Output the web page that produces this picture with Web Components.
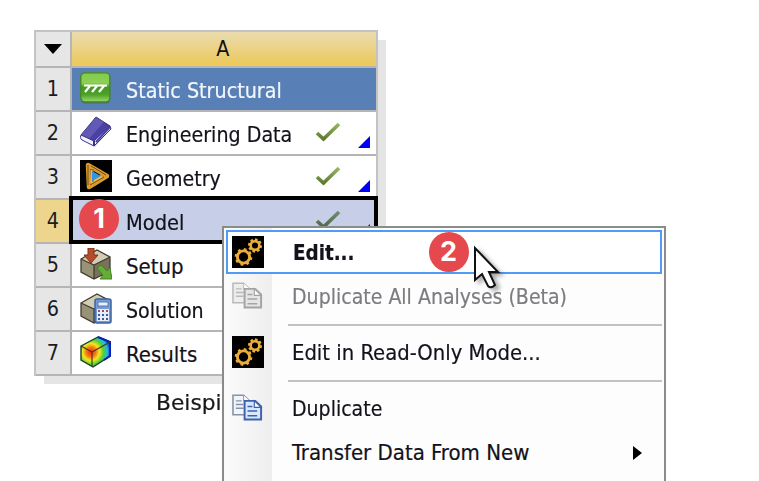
<!DOCTYPE html>
<html lang="en"><head><meta charset="utf-8"><title>Static Structural system</title>
<style>
body{margin:0;width:759px;height:481px;overflow:hidden;position:relative;background:#fff;font:22px/26px "DejaVu Sans Condensed","Noto Sans",sans-serif;color:#111}
system-table{position:absolute;left:34px;top:30px}
context-menu{position:absolute;left:222px;top:226px}
.b1{position:absolute;left:79px;top:199px}.b2{position:absolute;left:428.5px;top:231.5px}
mouse-pointer{position:absolute;left:472px;top:244px}
.caption{position:absolute;left:156px;top:390px;color:#181818}
</style></head><body>
<system-table>
<system-row n="1" icon="static" title-row><fit-text w="156">Static Structural</fit-text></system-row>
<system-row n="2" icon="book" check><fit-text w="166">Engineering Data</fit-text></system-row>
<system-row n="3" icon="geometry" check><fit-text w="95">Geometry</fit-text></system-row>
<system-row n="4" selected check><fit-text w="58">Model</fit-text></system-row>
<system-row n="5" icon="setup"><fit-text w="58">Setup</fit-text></system-row>
<system-row n="6" icon="solution"><fit-text w="78">Solution</fit-text></system-row>
<system-row n="7" icon="results"><fit-text w="71">Results</fit-text></system-row>
</system-table>
<fit-text class="caption" w="66">Beispi</fit-text>
<context-menu>
<menu-item icon="gears" active><fit-text w="62">Edit...</fit-text></menu-item>
<menu-item icon="copygray" disabled><fit-text w="275">Duplicate All Analyses (Beta)</fit-text></menu-item>
<menu-separator></menu-separator>
<menu-item icon="gears"><fit-text w="249">Edit in Read-Only Mode...</fit-text></menu-item>
<menu-separator></menu-separator>
<menu-item icon="copy"><fit-text w="90">Duplicate</fit-text></menu-item>
<menu-item submenu><fit-text w="237">Transfer Data From New</fit-text></menu-item>
</context-menu>
<step-badge class="b1">1</step-badge><step-badge class="b2">2</step-badge>
<mouse-pointer></mouse-pointer>
<script>
const gear=(x,y,r,sw)=>{let t='';for(let i=0;i<8;i++)t+=`<rect x="${x-1.4}" y="${y-r-2}" width="2.8" height="2.8" fill="#e9ad3c" transform="rotate(${i*45+12} ${x} ${y})"/>`;return t+`<circle cx="${x}" cy="${y}" r="${r-.7}" fill="none" stroke="#e9ad3c" stroke-width="${sw}"/>`};
const box=`<path d="M1 11L17 2L30 9V23L14 31L1 24Z" fill="#b9b49a"/><path d="M1 11L14 17V31L1 24Z" fill="#989276"/><path d="M14 17L30 9V23L14 31Z" fill="#77725b"/><path d="M1 11L17 2L30 9L14 17Z" fill="#d2ceb6"/><path d="M1 11L17 2L30 9V23L14 31L1 24ZM1 11L14 17L30 9M14 17V31" fill="none" stroke="#413e31" stroke-width="1.3"/>`;
const pages=(a,b,c,d)=>`<g transform="translate(0 .5) scale(.97 .93)"><path d="M1 3H12L18 9V24H1Z" fill="${a}" stroke="${c}" stroke-width="1.6"/><path d="M12 3V9H18" fill="#fff" stroke="${c}"/><path d="M4 9H10M4 13H12M4 17H12" stroke="${c}" stroke-width="1.6"/><path d="M13 9H24L30 15V29H13Z" fill="${b}" stroke="${d}" stroke-width="2"/><path d="M23 9V16H30Z" fill="#fff" stroke="${d}" stroke-width="1.2"/><path d="M16 15H21M16 20H26M16 25H26" stroke="${d}" stroke-width="1.6"/></g>`;
const icons={
static:`<defs><linearGradient id="g" x2="0" y2="1"><stop stop-color="#83c94e"/><stop offset=".35" stop-color="#8ed053"/><stop offset=".5" stop-color="#45991f"/><stop offset=".75" stop-color="#4da128"/><stop offset="1" stop-color="#9ddb6c"/></linearGradient></defs><rect x=".8" y="2" width="29.4" height="29.5" rx="4" fill="#31681f" opacity=".5"/><rect x=".8" y=".8" width="29" height="29" rx="4" fill="url(#g)" stroke="#43891f" stroke-width="1.3"/><path d="M4 13.5H27M10 14L5 20M17 14L12 20M24 14L19 20" fill="none" stroke="#fff" stroke-width="2.2"/>`,
book:`<path d="M2 21L15 31L31 13V11L14 27Z" fill="#777" opacity=".35"/><path d="M16 1L30 10L14 26L1 19Z" fill="#4b41a4" stroke="#302778"/><path d="M16 1L24 6L9 23L1 19Z" fill="#7771c6" opacity=".5"/><path d="M1 19Q-1 22 2 24L14 30L31 13L30 10L14 25Z" fill="#f3f2fa" stroke="#3b338b" stroke-width="1"/><path d="M14 25V30" stroke="#3b338b" stroke-width="2"/><path d="M16 26L30 11" stroke="#4b41a4" stroke-width="2"/>`,
geometry:`<path d="M0 0H32V32H0Z" fill="#000"/><g fill="none" stroke="#d99a2e" stroke-linejoin="round"><path d="M8 5L27 16L9 27Z" stroke-width="4.5"/><path d="M12 10V22L22 16" stroke="#efb948" stroke-width="3"/></g><path d="M8 5V25M11 6L26 15M10 25L24 17M13 9V22" stroke="#6b4511" stroke-width=".9"/><path d="M12 11L21 16L12 21Z" fill="#3394e6"/>`,
setup:box+`<path d="M8 0H14V7H18L11 15L4 7H8Z" fill="#b64c29" stroke="#81321a"/><path d="M17 20L21 17L27 23L30 20L32 31L20 31L23 27Z" fill="#64ae35" stroke="#448325"/>`,
solution:box+`<rect x="15" y="7" width="16" height="24" rx="2" fill="#769bd5" stroke="#3d62a0" stroke-width="1.5"/><rect x="18" y="10" width="10" height="4" fill="#e8f1ff" stroke="#537bb6"/><path d="M17 17H29V29H17Z" fill="#e6edf8"/><path d="M18 19H28" stroke="#a14b61" stroke-width="2" stroke-dasharray="2 2"/><path d="M18 23H28M18 27H28" stroke="#3d5d91" stroke-width="2" stroke-dasharray="2 2"/>`,
results:`<defs><radialGradient id="r" cx="11" cy="16" r="21" gradientUnits="userSpaceOnUse"><stop stop-color="#f52b0c"/><stop offset=".23" stop-color="#f57a12"/><stop offset=".4" stop-color="#f2e721"/><stop offset=".6" stop-color="#53cf31"/><stop offset=".78" stop-color="#20bde2"/><stop offset=".95" stop-color="#0b25ce"/></radialGradient></defs><path d="M1 10L18 1L30 6V20L13 31L1 24Z" fill="url(#r)" stroke="#16451f" stroke-width="1.4"/><path d="M18 1L30 6V20L24 24" fill="none" stroke="#0820b8" stroke-width="2"/><path d="M1 10L12 16L30 6M12 16V30" fill="none" stroke="#493914" stroke-width="1.2"/>`,
gears:`<path d="M0 0H32V32H0Z" fill="#000"/>${gear(11.5,21,6.8,2.9)}${gear(23,9.5,5,2.5)}`,
copy:pages('#f0f4fb','#d9e8ff','#8791a7','#3c61af'),copygray:pages('#ededed','#e5e5e5','#b9b9b9','#a4a4a4')};
const define=(name,make,after)=>customElements.define(name,class extends HTMLElement{connectedCallback(){if(!this.shadowRoot){this.attachShadow({mode:'open'}).innerHTML=make(this);after&&after(this)}}});
define('fit-text',()=>`<style>:host{display:block;white-space:nowrap;flex:none}span{display:inline-block;transform-origin:0 50%;-webkit-text-stroke:.2px currentColor}</style><span><slot></slot></span>`,e=>{const w=+e.getAttribute('w');e.style.width=w+'px';const fit=()=>{const s=e.shadowRoot.querySelector('span');if(s.offsetWidth)s.style.transform=`scaleX(${w/s.offsetWidth})`};requestAnimationFrame(fit)});
define('ui-icon',e=>`<style>:host{display:block;width:32px;height:32px;flex:none}svg{display:block}</style><svg width="32" height="32" viewBox="0 0 32 32">${icons[e.getAttribute('name')]||''}</svg>`);
define('system-table',()=>`<style>:host{display:block;box-sizing:border-box;width:344px;height:346px;border:2px solid #c3c3c3;border-bottom:0;background:#b5b5b5;box-shadow:8px 8px 0 #e5e5e5;clip-path:polygon(0 0,344px 0,344px 10px,352px 10px,352px 354px,10px 354px,10px 346px,0 346px)}header{display:grid;grid-template-columns:34px 304px;gap:2px;height:34px;margin-bottom:2px}header div{display:grid;place-items:center;background:#e6e6e6}.a{background:linear-gradient(#ebdcaf,#ebcb65 85%,#f1c957)}svg{margin-top:-1px}.a span{transform:translate(-1px,0) scaleX(.97)}</style><header><div><svg width="18" height="10"><path d="M0 0H18L9 10Z"/></svg></div><div class="a"><span>A</span></div></header><slot></slot>`);
define('system-row',e=>{const s=e.hasAttribute('selected'),t=e.hasAttribute('title-row');return `<style>:host{display:grid;grid-template-columns:34px 304px;gap:2px;height:42px;margin-bottom:2px;position:relative}.n{display:grid;place-items:center;background:${s?'#edd58d':'#e6e6e6'};color:#1b1b24}.n span{transform:translateX(-.5px) scaleX(.97)}.c{display:flex;align-items:center;background:${s?'#c7cee8':t?'#5980b6':'#fff'};color:${t?'#f2f6fc':'#12121b'};padding-left:8px;position:relative}ui-icon{margin-right:14px;margin-top:-2px}slot{display:block}.text{padding-top:4px}.check{margin:-3px 17px 0 auto}.corner{align-self:end;margin-right:6px;margin-bottom:6px}.ring{position:absolute;inset:-4px -2px -2px 33px;border:4px solid #000;z-index:2}</style><div class="n"><span>${e.getAttribute('n')}</span></div><div class="c"><ui-icon name="${e.getAttribute('icon')||''}"></ui-icon><div class="text"><slot></slot></div>${e.hasAttribute('check')?`<svg class="check" width="26" height="20"><defs><linearGradient id="c" x2="0" y2="1"><stop stop-color="${s?'#708c72':'#98b665'}"/><stop offset="1" stop-color="${s?'#4c6948':'#5e7932'}"/></linearGradient></defs><path d="M2 11L8.5 17L24 2" fill="none" stroke="url(#c)" stroke-width="3.7"/></svg><svg class="corner" width="12" height="12"><path d="M12 0V12H0Z" fill="#0000f2"/></svg>`:''}</div>${s?'<div class="ring"></div>':''}`});
define('context-menu',()=>`<style>:host{display:block;box-sizing:border-box;width:444px;height:270px;border:2px solid #8b8b8b;padding:2px;background:linear-gradient(90deg,#fafafa 2px,#fbfbfb 2px,#eeeeee 48px,#fdfdfd 48px)}</style><slot></slot>`);
define('menu-item',e=>{const a=e.hasAttribute('active');return `<style>:host{display:flex;box-sizing:border-box;height:44px;align-items:center;border:2px solid ${a?'#509bf6':'transparent'};background:${a?'#fff':'none'};padding-left:4px;color:${e.hasAttribute('disabled')?'#7c7c80':'#12121b'};font-weight:${a?'bold':'normal'}}ui-icon{margin-right:${a?29:28}px}.t{padding-top:1px}.arrow{margin-left:auto;margin-right:18px;margin-top:2px}</style><ui-icon name="${e.getAttribute('icon')||''}"></ui-icon><div class="t"><slot></slot></div>${e.hasAttribute('submenu')?'<svg class="arrow" width="9" height="14"><path d="M0 0L9 7L0 14Z"/></svg>':''}`});
define('menu-separator',()=>`<style>:host{display:block;height:12px;padding:6px 0 0 62px;box-sizing:border-box}div{height:2px;background:#c2c2c2}</style><div></div>`);
define('step-badge',()=>`<style>:host{display:grid;place-items:center;width:40px;height:40px;border-radius:50%;background:#e5484d;color:#fff;font:bold 27px/40px Inter,sans-serif}</style><span><slot></slot></span>`);
define('mouse-pointer',()=>`<style>:host{display:block}svg{display:block;filter:drop-shadow(4px 3px 2px #0005)}</style><svg width="34" height="46" viewBox="0 0 34 46"><path d="M3 4V36L10 30L16 42Q19 45 23 41L17 28H26Z" fill="#fff" stroke="#111" stroke-width="2"/></svg>`);
</script></body></html>
